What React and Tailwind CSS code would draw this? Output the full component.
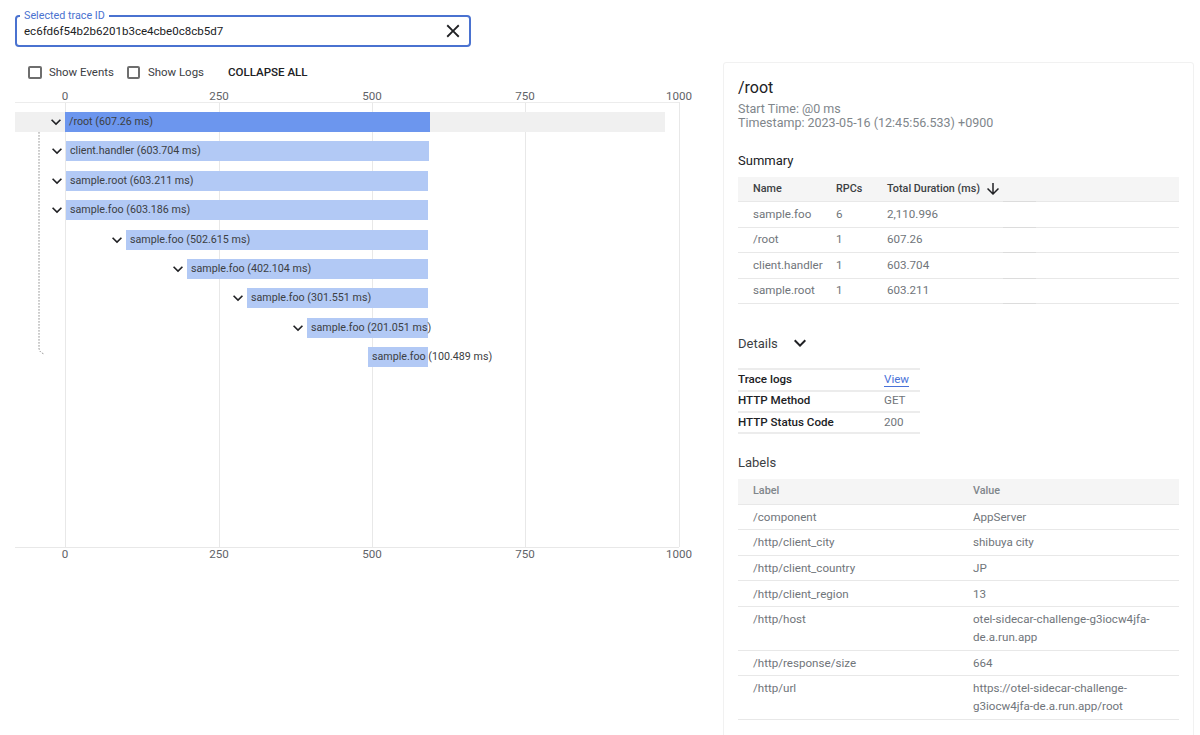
const TICKS = [
  { label: "0", line: "left-[50px]", text: "left-[30px]" },
  { label: "250", line: "left-[204px]", text: "left-[184px]" },
  { label: "500", line: "left-[357px]", text: "left-[337px]" },
  { label: "750", line: "left-[510px]", text: "left-[490px]" },
  { label: "1000", line: "left-[664px]", text: "left-[644px]" },
];

const SPANS = [
  { name: "/root (607.26 ms)", bar: "ml-[50px] w-[364.5px] bg-[#6c96ee]", chevron: "-left-[19.5px]", selected: true },
  { name: "client.handler (603.704 ms)", bar: "ml-[51px] w-[362.5px] bg-[#b2c9f5]", chevron: "-left-[19px]" },
  { name: "sample.root (603.211 ms)", bar: "ml-[51px] w-[362px] bg-[#b2c9f5]", chevron: "-left-[19px]" },
  { name: "sample.foo (603.186 ms)", bar: "ml-[51px] w-[362px] bg-[#b2c9f5]", chevron: "-left-[19px]" },
  { name: "sample.foo (502.615 ms)", bar: "ml-[111px] w-[302px] bg-[#b2c9f5]", chevron: "-left-[19px]" },
  { name: "sample.foo (402.104 ms)", bar: "ml-[172px] w-[241px] bg-[#b2c9f5]", chevron: "-left-[19px]" },
  { name: "sample.foo (301.551 ms)", bar: "ml-[232px] w-[181px] bg-[#b2c9f5]", chevron: "-left-[19px]" },
  { name: "sample.foo (201.051 ms)", bar: "ml-[292px] w-[121px] bg-[#b2c9f5]", chevron: "-left-[19px]" },
  { name: "sample.foo (100.489 ms)", bar: "ml-[353px] w-[60px] bg-[#b2c9f5]" },
];

const SUMMARY = [
  ["sample.foo", "6", "2,110.996"],
  ["/root", "1", "607.26"],
  ["client.handler", "1", "603.704"],
  ["sample.root", "1", "603.211"],
];

const LABELS = [
  ["/component", "AppServer"],
  ["/http/client_city", "shibuya city"],
  ["/http/client_country", "JP"],
  ["/http/client_region", "13"],
  ["/http/host", "otel-sidecar-challenge-g3iocw4jfa-de.a.run.app"],
  ["/http/response/size", "664"],
  ["/http/url", "https://otel-sidecar-challenge-g3iocw4jfa-de.a.run.app/root"],
];

function Icon({ d, size = 20, className = "" }) {
  return (
    <svg width={size} height={size} viewBox="0 0 24 24" fill="currentColor" className={className}>
      <path d={d} />
    </svg>
  );
}

const EXPAND = "M16.59 8.59L12 13.17 7.41 8.59 6 10l6 6 6-6z";
const CLOSE = "M19 6.41L17.59 5 12 10.59 6.41 5 5 6.41 10.59 12 5 17.59 6.41 19 12 13.41 17.59 19 19 17.59 13.41 12z";
const ARROW = "M20 12l-1.41-1.41L13 16.17V4h-2v12.17l-5.58-5.59L4 12l8 8 8-8z";

function Checkbox({ label }) {
  return (
    <label className="flex items-center gap-[7.5px]">
      <span className="block h-[13.5px] w-[13.5px] rounded-[2px] border-2 border-[#6e6e6e]" />
      <span>{label}</span>
    </label>
  );
}

function Chart() {
  return (
    <div className="relative ml-[15px] h-[480px] w-[690px] text-[10.7px] text-[#3c4043]">
      {TICKS.map((t) => (
        <div key={t.label}>
          <div className={`absolute top-[13px] h-[445px] w-px bg-[#e8e8e8] ${t.line}`} />
          <div className={`absolute top-0 w-[40px] text-center text-[11.6px] leading-[14px] text-[#5f6368] ${t.text}`}>{t.label}</div>
          <div className={`absolute top-[458px] w-[40px] text-center text-[11.6px] leading-[14px] text-[#5f6368] ${t.text}`}>{t.label}</div>
        </div>
      ))}
      <div className="absolute top-[13px] h-px w-[664px] bg-[#ececec]" />
      <div className="absolute top-[458px] h-px w-[664px] bg-[#e8e8e8]" />
      <svg className="absolute left-[20px] top-[31px] text-[#8a8a8a]" width="14" height="236" fill="none">
        <path d="M8 2 Q4 3 4 7 V228 Q4 232 9 234" stroke="currentColor" strokeWidth="1" strokeDasharray="1.5 1.5" />
      </svg>
      <div className="relative pt-[23px]">
        {SPANS.map((s) => (
          <div key={s.name + s.bar} className="h-[29.4px]">
            <div className={`h-[20px] ${s.selected ? "w-[650px] bg-[#f0f0f0]" : ""}`}>
              <div className={`relative h-[20px] whitespace-nowrap pl-[4px] leading-[20px] ${s.bar}`}>
                {s.chevron && <Icon d={EXPAND} className={`absolute top-0 text-[#202124] ${s.chevron}`} />}
                {s.name}
              </div>
            </div>
          </div>
        ))}
      </div>
    </div>
  );
}

function Panel() {
  return (
    <div className="ml-[18px] h-[680px] w-[471px] rounded-t-[3px] border border-[#f1f1f1] pl-[14px] pr-[14.5px] pt-[15px] text-[#70757a]">
      <div className="text-[16px] leading-[20px] text-[#202124]">/root</div>
      <div className="mt-[4px] text-[12.5px] leading-[14px] text-[#80868b]">
        <div>Start Time: @0 ms</div>
        <div>Timestamp: 2023-05-16 (12:45:56.533) +0900</div>
      </div>

      <div className="mt-[23px] text-[13px] leading-[16px] text-[#202124]">Summary</div>
      <div className="mt-[7.5px] text-[11.6px]">
        <div className="relative flex h-[25.5px] items-center border-b border-[#e8e8e8] bg-[#f5f5f5] pl-[15px] text-[10.8px] font-medium text-[#3c4043]">
          <div className="w-[83px]">Name</div>
          <div className="w-[51px]">RPCs</div>
          <div>Total Duration (ms)</div>
          <Icon d={ARROW} size={18} className="ml-[4px] text-[#202124]" />
          <div className="absolute -bottom-px left-[265px] h-px w-[33px] bg-[#dcdcdc]" />
        </div>
        {SUMMARY.map((row) => (
          <div key={row[0]} className="relative flex h-[25.6px] items-center border-b border-[#e8e8e8] pl-[15px]">
            <div className="w-[83px]">{row[0]}</div>
            <div className="w-[51px]">{row[1]}</div>
            <div>{row[2]}</div>
            <div className="absolute -bottom-px left-[265px] h-px w-[33px] bg-[#dcdcdc]" />
          </div>
        ))}
      </div>

      <div className="mt-[30px] flex h-[18px] items-center text-[13px] text-[#3c4043]">
        Details
        <Icon d={EXPAND} size={24} className="ml-[10px] text-[#202124]" />
      </div>
      <div className="mt-[16px] w-[182px] border-t-2 border-[#ececec] text-[11.6px]">
        <div className="flex h-[21.2px] items-center border-b-2 border-[#ececec]">
          <div className="w-[146px] font-medium text-[#202124]">Trace logs</div>
          <div className="border-b border-[#4a72d8] leading-[14px] text-[#4a72d8]">View</div>
        </div>
        <div className="flex h-[21.2px] items-center border-b-2 border-[#ececec]">
          <div className="w-[146px] font-medium text-[#202124]">HTTP Method</div>
          <div>GET</div>
        </div>
        <div className="flex h-[21.2px] items-center border-b-2 border-[#ececec]">
          <div className="w-[146px] font-medium text-[#202124]">HTTP Status Code</div>
          <div>200</div>
        </div>
      </div>

      <div className="mt-[21.5px] text-[13px] leading-[16px] text-[#3c4043]">Labels</div>
      <div className="mt-[7.5px] text-[11.6px]">
        <div className="flex h-[25.6px] items-center border-b border-[#e8e8e8] bg-[#f5f5f5] pl-[15px] text-[10.8px] font-medium text-[#80868b]">
          <div className="w-[220px]">Label</div>
          <div>Value</div>
        </div>
        {LABELS.map((row) => (
          <div key={row[0]} className="flex items-start border-b border-[#e8e8e8] py-[3.3px] pl-[15px] leading-[18px]">
            <div className="w-[220px] shrink-0">{row[0]}</div>
            <div className="w-[190px]">{row[1]}</div>
          </div>
        ))}
      </div>
    </div>
  );
}

export default function App() {
  return (
    <div className="h-[735px] w-[1200px] overflow-hidden bg-white font-['Roboto',sans-serif] text-[#202124]">
      <div className="pl-[15px] pt-[15px]">
        <div className="relative flex h-[32px] w-[456px] items-center rounded-[4px] border-2 border-[#4a72d0] pl-[7px] pr-[5px] text-[11.55px]">
          <span className="absolute -top-[7px] left-[3px] bg-white px-[4px] text-[10.75px] leading-[12px] text-[#4a72d0]">
            Selected trace ID
          </span>
          <span className="flex-1 pt-px">ec6fd6f54b2b6201b3ce4cbe0c8cb5d7</span>
          <Icon d={CLOSE} size={22} className="text-[#202124]" />
        </div>
      </div>

      <div className="flex items-start">
        <div className="w-[705px]">
          <div className="ml-[28px] mt-[18.5px] flex h-[14px] items-center text-[11.45px] text-[#3c4043]">
            <Checkbox label="Show Events" />
            <div className="ml-[13px]">
              <Checkbox label="Show Logs" />
            </div>
            <button className="ml-[24px] text-[11.55px] font-medium text-[#202124]">COLLAPSE ALL</button>
          </div>
          <div className="mt-[9.5px]">
            <Chart />
          </div>
        </div>
        <div className="mt-[15px]">
          <Panel />
        </div>
      </div>
    </div>
  );
}
